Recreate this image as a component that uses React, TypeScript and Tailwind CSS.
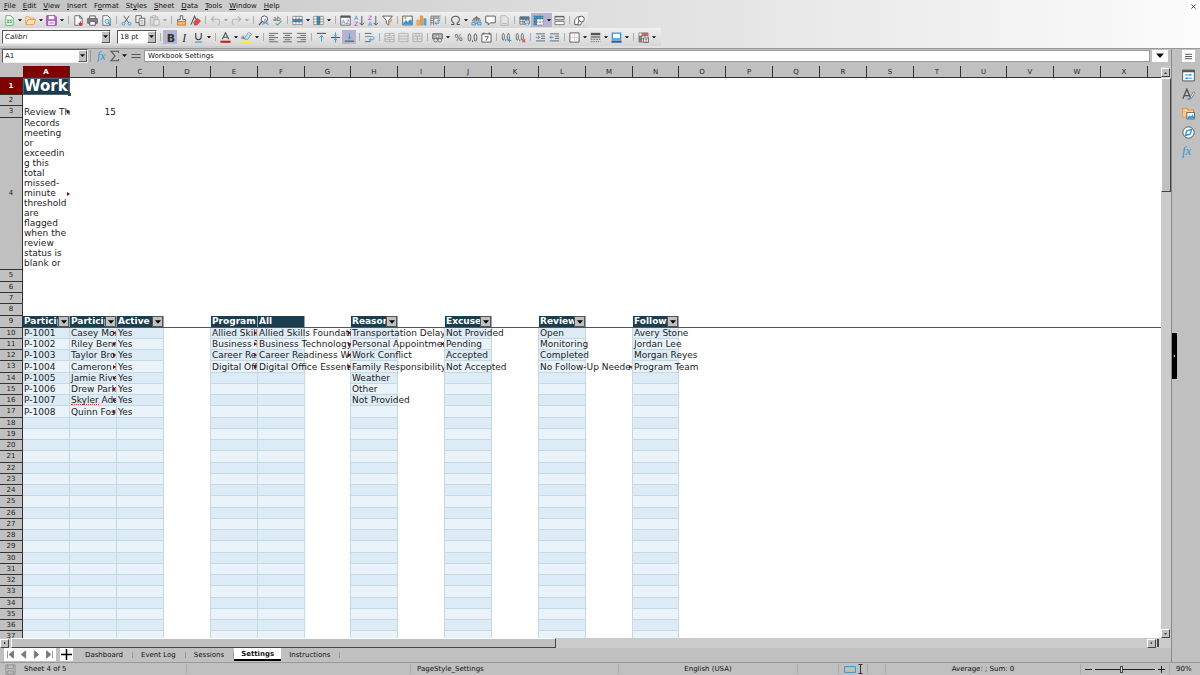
import React, { useState } from 'react';
import clsx from 'clsx';

const INK = '#555';
const BLUE = '#3596d8';
const FONT = "font-['DejaVu_Sans','Liberation_Sans',sans-serif]";

const page = <path d="M2 .8h5.4L10 3.4v7.8H2z" fill="#fff" stroke={INK} strokeWidth=".9" />;
const grid = <path d="M1 2h10v8H1zM1 4.7h10M1 7.4h10M4.3 2v8M7.6 2v8" fill="none" stroke={INK} strokeWidth=".8" />;
const omega = 'M1.2 10.3h3V9C2.4 8 1.7 6.600 1.700 5.200 1.700 2.800 3.500 1.300 6 1.300s4.300 1.500 4.300 3.900C10.300 6.600 9.600 8 7.800 9v1.300h3';

const icons: Record<string, React.ReactNode> = {
  new: (
    <>
      <path d="M2 .8h5.4L10 3.4v7.8H2z" fill="#fff" stroke="#4fae6a" />
      <path d="M3.500 5h5v4h-5z" fill="#4fae6a" />
      <path d="M3.500 7h5M6 5v4" stroke="#fff" strokeWidth=".6" />
    </>
  ),
  open: (
    <>
      <path d="M1 10V2h3.500l1 1.500H10V5" fill="#fff3e0" stroke="#e8973c" />
      <path d="M1 10.500 3 5h8.600l-2 5.500z" fill="#fde3bd" stroke="#e8973c" />
    </>
  ),
  save: (
    <>
      <path d="M.8.8h9.200L11.200 2v9.200H.8z" fill="#b968c8" stroke="#8f3fa3" />
      <path d="M3 1h6v3.500H3z" fill="#fff" />
      <path d="M2.500 6.500h7V11h-7z" fill="#fff" />
      <path d="M3.500 8h5M3.500 9.500h5" stroke="#b05ec0" strokeWidth=".7" />
    </>
  ),
  pdf: (
    <>
      {page}
      <path d="M7.400.8v2.600H10" fill="none" stroke={INK} />
      <path d="M8 7v3.500M6.200 9 8 11l1.900-2" fill="none" stroke="#d8262c" strokeWidth="1.300" />
    </>
  ),
  print: (
    <>
      <path d="M3 4V1h6v3" fill="#fff" stroke={INK} />
      <path d="M.8 4h10.400v5H.8z" fill="#888" stroke={INK} />
      <path d="M3 7h6v4.200H3z" fill="#fff" stroke={INK} />
    </>
  ),
  preview: (
    <>
      {page}
      <circle cx="6.500" cy="7" r="2.200" fill="#d7edfb" stroke={BLUE} />
      <path d="m8 8.600 2.500 2.600" stroke={BLUE} strokeWidth="1.300" />
    </>
  ),
  cut: (
    <>
      <path d="M3 .8 8.300 8.500M9 .8 3.700 8.500" stroke={INK} />
      <circle cx="2.700" cy="9.500" r="1.600" fill="none" stroke={BLUE} />
      <circle cx="9.300" cy="9.500" r="1.600" fill="none" stroke={BLUE} />
    </>
  ),
  copy: (
    <>
      <path d="M1 .8h6v7.500H1z" fill="#fff" stroke={INK} />
      <path d="M4.500 3.500h6.200v7.700H4.500z" fill="#fff" stroke={INK} />
      <path d="M6 6h3.200M6 7.500h3.200M6 9h3.200" stroke={BLUE} strokeWidth=".7" />
    </>
  ),
  paste: (
    <>
      <path d="M1.500 2h8v9h-8z" fill="#d6d6d6" stroke="#b4b4b4" />
      <path d="M3.500.8h4V3h-4zM5.500 5h5.500v6.300H5.500z" fill="#e8e8e8" stroke="#b4b4b4" />
    </>
  ),
  clone: (
    <>
      <path d="M4.700.8h2.600V5h3v2H1.700V5h3z" fill="#fff" stroke={INK} />
      <path d="M1.700 7h8.600v4H1.700z" fill="#f7b878" stroke="#cf7a24" />
    </>
  ),
  clear: (
    <>
      <path d="M1 10.500 5 1.500l3 6" fill="none" stroke={INK} strokeWidth="1.200" />
      <path d="m4 8 4-4.500 3.500 3L7.500 11H5z" fill="#e5484d" stroke="#b8252b" strokeWidth=".6" />
    </>
  ),
  undo: <path d="M4.500 1.500 1.300 4.700l3.200 3M1.500 4.700H8c3.200 0 3.700 4 1 6" fill="none" stroke="#b4b4b4" strokeWidth="1.100" />,
  redo: <path d="m7.500 1.500 3.200 3.200-3.200 3M10.500 4.700H4c-3.200 0-3.700 4-1 6" fill="none" stroke="#b4b4b4" strokeWidth="1.100" />,
  find: (
    <>
      <circle cx="7" cy="4.500" r="3.500" fill="#fff" stroke={INK} />
      <path d="M4.500 7 1 11" stroke={INK} strokeWidth="1.400" />
      <path d="M5 11 8 4l3 7M6 9h4" fill="none" stroke={BLUE} strokeWidth=".9" />
    </>
  ),
  spell: (
    <>
      <text x="1" y="7" fontSize="7" fill={INK}>ab</text>
      <path d="m4 9 1.800 2L10.500 6.500" fill="none" stroke="#42a96a" strokeWidth="1.100" />
    </>
  ),
  row: (
    <>
      <path d="M.8 1.500h10.400v9H.8z" fill="#fff" />
      <path d="M.8 4.500h10.400v3H.8z" fill={BLUE} />
      <path d="M.8 1.500h10.400v9H.8zM.8 4.500h10.400M.8 7.500h10.400M4.300 1.500v9M7.700 1.500v9" fill="none" stroke={INK} strokeWidth=".6" />
    </>
  ),
  col: (
    <>
      <path d="M.8 1.500h10.400v9H.8z" fill="#fff" />
      <path d="M4.300 1.500h3.400v9H4.300z" fill={BLUE} />
      <path d="M.8 1.500h10.400v9H.8zM.8 4.500h10.400M.8 7.500h10.400M4.300 1.500v9M7.700 1.500v9" fill="none" stroke={INK} strokeWidth=".6" />
    </>
  ),
  sort: (
    <>
      <path d="M.8 1h10.400v10H.8z" fill="#fff" stroke={INK} strokeWidth=".9" />
      <path d="M.8 1h10.400v2H.8z" fill={INK} />
      <text x="1.300" y="9.500" fontSize="6.500" fill={BLUE}>A</text>
      <text x="6" y="9.500" fontSize="6.500" fill="#b04fc4">Z</text>
    </>
  ),
  sortAsc: (
    <>
      <text x="0" y="5.500" fontSize="6.500" fill={BLUE}>A</text>
      <text x="0" y="11.500" fontSize="6.500" fill="#b04fc4">Z</text>
      <path d="M8.500 1v10M6 8.500 8.500 11 11 8.500" fill="none" stroke={INK} />
    </>
  ),
  sortDesc: (
    <>
      <text x="0" y="5.500" fontSize="6.500" fill="#b04fc4">Z</text>
      <text x="0" y="11.500" fontSize="6.500" fill={BLUE}>A</text>
      <path d="M8.500 1v10M6 8.500 8.500 11 11 8.500" fill="none" stroke={INK} />
    </>
  ),
  filter: (
    <>
      <path d="M.8 1.200h10.400L7.300 6v5L4.700 9V6z" fill="#fff" stroke={INK} />
      <path d="M11 3.500 7 7.500v3.500l4-5z" fill="#f0953d" />
    </>
  ),
  image: (
    <>
      <path d="M.8 1.200h10.400v9.600H.8z" fill="#fff" stroke={INK} />
      <path d="m1.300 9 3-3.500 2 2L9 4.500l1.800 2v3.800H1.300z" fill={BLUE} />
      <circle cx="3.800" cy="3.500" r="1.200" fill="#f0953d" />
    </>
  ),
  chart: (
    <>
      <path d="M1 5.500h2.500V11H1z" fill="#f7b267" stroke="#d9822b" strokeWidth=".6" />
      <path d="M4.700 1h2.600v10H4.700z" fill="#f0953d" stroke="#d9822b" strokeWidth=".6" />
      <path d="M8.500 4H11v7H8.500z" fill="#56a7e0" stroke={BLUE} strokeWidth=".6" />
    </>
  ),
  pivot: (
    <>
      <path d="M1 1.200h10.500M1 1.200V11M1 3.500h3M1 6h3M1 8.500h3M4 1.200V11M6.500 1.200v2M9 1.200v2M4 3.500h7.500" fill="none" stroke={INK} strokeWidth=".7" />
      <path d="M5.500 9h4V5.500M7 7.500 5.500 9 7 10.500M8 6.500l1.500-1.500L11 6.500" fill="none" stroke={BLUE} />
    </>
  ),
  omega: <path d={omega} fill="none" stroke={INK} strokeWidth="1.100" />,
  link: (
    <>
      <path d="M1.500 6.500a4.600 4.600 0 0 1 9 0zM6 1.500v5M2.200 4.300h7.600M4 6.500c0-3 1-4 2-5 1 1 2 2 2 5" fill="#eee" stroke={INK} strokeWidth=".7" />
      <path d="M1 8h4v2.700H1zM7 8h4v2.700H7zM4 9.300h4" fill="none" stroke={BLUE} />
    </>
  ),
  comment: <path d="M.8 1.200h10.400v7.300H6L3.500 11V8.500H.8z" fill="#fff" stroke={INK} />,
  headers: (
    <>
      <path d="M2 .8h5.400L10 3.400v7.800H2z" fill="#e4e4e4" stroke="#b4b4b4" />
      <path d="M3.500 9.300h5" stroke="#b4b4b4" />
    </>
  ),
  define: (
    <>
      <path d="M1 2h10v8H1z" fill="#fff" />
      <path d="M1 2h10v2.600H1z" fill={BLUE} />
      {grid}
      <path d="M6 6.500h5.500v2.500H6z" fill="#fff" stroke={INK} strokeWidth=".8" />
      <path d="M7 9h3.500v2H7z" fill="#fff" stroke={BLUE} strokeWidth=".7" />
    </>
  ),
  freeze: (
    <>
      <path d="M1 1h10v10H1z" fill="#fff" />
      <path d="M1 1h10v3.300H1zM1 1h3.300v10H1z" fill={BLUE} />
      <path d="M1 1h10v10H1zM1 4.300h10M1 7.600h10M4.300 1v10M7.600 1v10" fill="none" stroke={INK} strokeWidth=".6" strokeDasharray="2 1" />
    </>
  ),
  split: (
    <>
      <path d="M1 1.500h10v3.300H1zM1 7.200h10v3.300H1z" fill="#fff" stroke={INK} strokeWidth=".8" />
      <path d="M1 2h10" stroke={INK} strokeWidth="1.200" />
      <path d="M0 6h12" stroke="#999" strokeWidth=".6" />
    </>
  ),
  shapes: (
    <>
      <path d="M.8 5 4 2h4v5l-3 3.500H.8z" fill="#fff" stroke={INK} />
      <circle cx="8" cy="4.500" r="3.200" fill="#fff" stroke={INK} />
      <path d="m5.500 6 3 2.300-1.500 2.500H4z" fill="#fff" stroke={INK} />
    </>
  ),
  bold: <text x="1.800" y="10.700" fontSize="12" fontWeight="bold" fill="#333">B</text>,
  italic: <text x="3.500" y="10.500" fontSize="13" fontStyle="italic" fontFamily="Liberation Serif" fill="#333">I</text>,
  underline: (
    <>
      <path d="M3 1v4.500c0 3.800 6 3.800 6 0V1" fill="none" stroke="#333" strokeWidth="1.100" />
      <path d="M2 11h8" stroke={BLUE} strokeWidth="1.200" />
    </>
  ),
  fontColor: (
    <>
      <path d="M2.500 8 6 .8 9.500 8M3.800 5.800h4.400" fill="none" stroke={INK} strokeWidth="1.200" />
      <path d="M.5 9.500h11v2.300H.5z" fill="#c9211e" />
    </>
  ),
  highlight: (
    <>
      <text x="0" y="8" fontSize="6.500" fill={INK}>a</text>
      <path d="m4 6 3-4 3 2-2.500 4H4z" fill="#bcdcf3" stroke={BLUE} strokeWidth=".8" />
      <path d="m7 2 1.500-1.500 3 2L10 4" fill="#fff" stroke={INK} strokeWidth=".7" />
      <path d="M.5 9.500h11v2.300H.5z" fill="#ffee20" />
    </>
  ),
  alignLeft: <path d="M1 1.500h10M1 3.800h6M1 6.100h10M1 8.400h6M1 10.700h10" stroke={INK} strokeWidth=".9" />,
  alignCenter: <path d="M1 1.500h10M3 3.800h6M1 6.100h10M3 8.400h6M1 10.700h10" stroke={INK} strokeWidth=".9" />,
  alignRight: <path d="M1 1.500h10M5 3.800h6M1 6.100h10M5 8.400h6M1 10.700h10" stroke={INK} strokeWidth=".9" />,
  alignTop: (
    <>
      <path d="M1 1.500h10" stroke={INK} strokeWidth="1.200" />
      <path d="M6 10.500V4M3.800 6 6 3.800 8.200 6" fill="none" stroke={BLUE} />
    </>
  ),
  alignMiddle: (
    <>
      <path d="M1 6h10" stroke={INK} strokeWidth="1.200" />
      <path d="M6 .5v4M4.300 3 6 4.700 7.700 3M6 11.500v-4M4.300 9 6 7.300 7.700 9" fill="none" stroke={BLUE} />
    </>
  ),
  alignBottom: (
    <>
      <path d="M1 10h10" stroke={INK} strokeWidth="1.200" />
      <path d="M6 1v6.500M3.800 5.500 6 7.700l2.200-2.200" fill="none" stroke={BLUE} />
    </>
  ),
  wrap: (
    <>
      <path d="M1 1.500h7M1 10.500h6" stroke={INK} strokeWidth=".9" />
      <path d="M1 5h8c2.500 0 2.500 3.500 0 3.500H6M7.500 6.800 5.800 8.500l1.700 1.700" fill="none" stroke={BLUE} />
    </>
  ),
  merge: <path d="M1 1.500h10v9H1zM1 4h10M1 8h10M6 1.500V4M6 8v2.500M3 6h6" fill="none" stroke="#ababab" strokeWidth=".9" />,
  mergeCells: <path d="M1 1.500h10v9H1zM1 4.500h10M1 7.500h10" fill="none" stroke="#ababab" strokeWidth=".9" />,
  unmerge: <path d="M1 1.500h10v9H1zM1 4.500h10M1 7.500h10M4.300 1.500v3M7.600 1.500v3M6 4.500v6" fill="none" stroke="#ababab" strokeWidth=".9" />,
  currency: (
    <>
      <path d="M.8 2h10.400v5.500H.8z" fill="#bbb" stroke={INK} />
      <circle cx="6" cy="4.700" r="1.600" fill="#eee" stroke={INK} strokeWidth=".6" />
      <circle cx="4" cy="9" r="2" fill="#ddd" stroke={INK} strokeWidth=".7" />
      <circle cx="8.500" cy="9" r="2" fill="#ddd" stroke={INK} strokeWidth=".7" />
    </>
  ),
  percent: <text x="1.500" y="9.500" fontSize="9.500" fill={INK}>%</text>,
  number: <path d="M2.700 2C.8 2 .8 10 2.700 10s1.900-8 0-8zM9.200 2c-1.900 0-1.900 8 0 8s1.900-8 0-8zM6 9v2" fill="none" stroke={INK} />,
  date: (
    <>
      <path d="M1 2h10v9H1z" fill="#fff" stroke={INK} />
      <path d="M3 .5V3M9 .5V3M4 5h4L5.500 9.500" fill="none" stroke={INK} />
    </>
  ),
  addDecimal: (
    <>
      <path d="M2.500 1.500C.9 1.500.9 9 2.500 9s1.600-7.500 0-7.500zM8 1.500C6.400 1.500 6.400 9 8 9s1.600-7.500 0-7.500zM5.200 8v2" fill="none" stroke={INK} strokeWidth=".9" />
      <path d="M9.300 7.300v4M7.300 9.300h4" stroke={BLUE} strokeWidth="1.100" />
    </>
  ),
  delDecimal: (
    <>
      <path d="M2.500 1.500C.9 1.500.9 9 2.500 9s1.600-7.500 0-7.500zM8 1.500C6.400 1.500 6.400 9 8 9s1.600-7.500 0-7.500zM5.200 8v2" fill="none" stroke={INK} strokeWidth=".9" />
      <path d="m8 8 3.300 3.300M11.300 8 8 11.300" stroke="#e5484d" strokeWidth="1.100" />
    </>
  ),
  indent: (
    <>
      <path d="M1 2h10M6.500 4.500H11M6.500 7H11M1 9.700h10" stroke={INK} strokeWidth=".9" />
      <path d="M.8 5.800h4M3.200 4l1.900 1.800-1.900 1.700" fill="none" stroke={BLUE} />
    </>
  ),
  outdent: (
    <>
      <path d="M1 2h10M6.500 4.500H11M6.500 7H11M1 9.700h10" stroke={INK} strokeWidth=".9" />
      <path d="M1 5.800h4.200M2.800 4 1 5.800l1.800 1.700" fill="none" stroke={BLUE} />
    </>
  ),
  borders: (
    <>
      <path d="M1 1h10v10H1z" fill="#fff" stroke={INK} />
      <path d="M6 1.500v9M1.500 6h9" stroke="#f0b898" strokeWidth=".8" />
    </>
  ),
  lineStyle: (
    <>
      <path d="M.8 2.200h10.400" stroke={INK} strokeWidth="2.600" />
      <path d="M.8 5.500h10.400" stroke={INK} strokeWidth="1.300" />
      <path d="M.8 8h10.400" stroke={INK} strokeDasharray="2 1" />
      <path d="M.8 10.500h10.400" stroke={INK} strokeDasharray="1 1" />
    </>
  ),
  lineColor: (
    <>
      <path d="M1.500 1.200h9v6.500h-9z" fill="#fff" stroke={BLUE} strokeWidth="1.500" />
      <path d="M.5 9.300h11v2.400H.5z" fill="#2a6099" />
    </>
  ),
  conditional: (
    <>
      <path d="M1 1h10v10H1z" fill="#fff" />
      <path d="M4.300 1H11v3.300H4.300z" fill="#ee6a6e" />
      <path d="M1 4.300h3.300v3.300H1z" fill="#59b36c" />
      <path d="M1 7.600h3.300V11H1z" fill="#ee6a6e" />
      <path d="M1 1h10v10H1zM1 4.300h10M1 7.600h10M4.300 1v10M7.600 1v6" fill="none" stroke={INK} strokeWidth=".6" />
      <path d="M6 6.500h5.500v5H6z" fill="#eee" stroke={INK} strokeWidth=".8" />
      <path d="M7.500 8h2.700M7.500 10h2.700" stroke={INK} strokeWidth=".7" />
    </>
  ),
  fx: <text x="0" y="9.500" fontSize="12" fontStyle="italic" fontFamily="Liberation Serif" fill={BLUE}>fx</text>,
  sum: <path d="M9.500 2.800V1.200H2L6 6l-4 4.800h7.500V9" fill="none" stroke={INK} strokeWidth="1.100" />,
  equals: <path d="M1.500 4.500h9M1.500 7.500h9" stroke={INK} strokeWidth="1.200" />,
  properties: (
    <>
      <path d="M.6 1h10.800v10H.6z" fill="#fff" stroke={INK} strokeWidth=".9" />
      <path d="M.6 1h10.800v2H.6z" fill={INK} />
      <path d="M2.500 5.500h7M2.500 8.500h7M7.500 4.300v2.400M4.500 7.300v2.400" stroke={BLUE} strokeWidth=".9" />
    </>
  ),
  styles: (
    <>
      <path d="M.8 10 4.500 1l3.200 8M2 7h4.500" fill="none" stroke={INK} strokeWidth="1.300" />
      <path d="m7.500 8.500 3.300-5 1 .8-3 5z" fill="#fff" stroke={INK} strokeWidth=".6" />
      <path d="M4 11c1.500-.2 1.800-2.500 3.500-2.500s2 2.700-3.500 2.500z" fill={BLUE} />
    </>
  ),
  gallery: (
    <>
      <path d="M.6 9.500V1.500h3.800l1 1.400h5.200V5" fill="#fde3bd" stroke="#e8973c" />
      <path d="M.6 3.500v6h4v-5z" fill="#f9c98d" stroke="#e8973c" strokeWidth=".6" />
      <path d="M4.500 5h7v6h-7z" fill="#fff" stroke={INK} strokeWidth=".8" />
      <path d="m5 10 2-2.300 1.200 1.200L9.500 7l1.600 2v1.500H5z" fill={BLUE} />
    </>
  ),
  navigator: (
    <>
      <circle cx="6" cy="6" r="5.200" fill="#fff" stroke={INK} strokeWidth=".9" />
      <path d="M9 3 7.500 7.500 3 9l1.500-4.500z" fill="none" stroke={BLUE} strokeWidth="1.300" />
    </>
  ),
};

function Icon({ name, className = 'size-3' }: { name: string; className?: string }) {
  return (
    <svg viewBox="0 0 12 12" className={clsx('shrink-0', className)} aria-hidden="true">
      {icons[name]}
    </svg>
  );
}

function Caret({ className = 'w-[5px]' }: { className?: string }) {
  return (
    <svg viewBox="0 0 6 4" className={clsx('shrink-0', className)} aria-hidden="true">
      <path d="M0 .3h6L3 3.700z" fill="currentColor" />
    </svg>
  );
}

// '|' is a separator, 'v' a drop-down arrow, 'x' a disabled one
const standardBar =
  'new v open v save v | pdf print preview | cut copy paste x | clone clear | undo x redo x | find spell | row v col v | sort sortAsc sortDesc filter | image chart pivot | omega v link comment headers | define freeze* v* split | shapes'.split(' ');
const formatBar =
  'bold* italic underline v | fontColor v highlight v | alignLeft alignCenter alignRight | alignTop alignMiddle alignBottom* | wrap | merge mergeCells unmerge | currency v percent number date | addDecimal delDecimal | indent outdent | borders v lineStyle v lineColor v | conditional v'.split(' ');

function ToolItems({ items }: { items: string[] }) {
  return (
    <>
      {items.map((item, i) => {
        const active = item.endsWith('*');
        const name = item.replace('*', '');
        if (name === '|') {
          return (
            <span key={i} className="flex w-[6px] shrink-0 justify-center">
              <span className="h-2 w-px bg-[#b0b0b0]" />
            </span>
          );
        }
        if (name === 'v' || name === 'x') {
          return (
            <button
              key={i}
              aria-label="More options"
              className={clsx('flex h-[14px] w-[7px] shrink-0 items-center justify-center', name === 'x' ? 'text-[#999]' : 'text-black', active && 'bg-[#b4b4d0]')}
            >
              <Caret className="w-1" />
            </button>
          );
        }
        return (
          <button
            key={i}
            aria-label={name}
            className={clsx('flex h-[14px] w-[14px] shrink-0 items-center justify-center', active && 'bg-[#b4b4d0]')}
          >
            <Icon name={name} className="size-[11px]" />
          </button>
        );
      })}
    </>
  );
}

function Combo({ label, value, className, italic }: { label: string; value: string; className: string; italic?: boolean }) {
  return (
    <div className={clsx('relative h-[14px] shrink-0 border border-r-[#eee] border-b-[#eee] border-[#555] bg-white', className)}>
      <select aria-label={label} className={clsx('block h-3 w-full appearance-none bg-transparent pl-[2px] leading-3 outline-none', italic && 'italic')}>
        <option>{value}</option>
      </select>
      <span className="pointer-events-none absolute inset-y-0 right-0 flex w-[9px] items-center justify-center border border-t-white border-r-[#555] border-b-[#555] border-l-white bg-[#c0c0c0]">
        <Caret className="w-[5px]" />
      </span>
    </div>
  );
}

const menus: [string, string, string][] = [
  ['', 'F', 'ile'], ['', 'E', 'dit'], ['', 'V', 'iew'], ['', 'I', 'nsert'], ['F', 'o', 'rmat'], ['St', 'y', 'les'],
  ['', 'S', 'heet'], ['', 'D', 'ata'], ['', 'T', 'ools'], ['', 'W', 'indow'], ['', 'H', 'elp'],
];

const columns = 'ABCDEFGHIJKLMNOPQRSTUVWX'.split('');
const banded = ['A', 'B', 'C', 'E', 'F', 'H', 'J', 'L', 'N'];

const headings: Record<string, string> = {
  A: 'Participant ID', B: 'Participant Name', C: 'Active', E: 'Program', F: 'All', H: 'Reason', J: 'Excused', L: 'Review', N: 'Follow-Up',
};

// cells filled from row 10 downwards
const lists: Record<string, string[]> = {
  A: ['P-1001', 'P-1002', 'P-1003', 'P-1004', 'P-1005', 'P-1006', 'P-1007', 'P-1008'],
  B: ['Casey Morgan', 'Riley Bennett', 'Taylor Brooks', 'Cameron Lee', 'Jamie Rivera', 'Drew Parker', 'Skyler Adams', 'Quinn Foster'],
  C: ['Yes', 'Yes', 'Yes', 'Yes', 'Yes', 'Yes', 'Yes', 'Yes'],
  E: ['Allied Skills', 'Business Tech', 'Career Readiness', 'Digital Office'],
  F: ['Allied Skills Foundations', 'Business Technology Basics', 'Career Readiness Workshop', 'Digital Office Essentials'],
  H: ['Transportation Delay', 'Personal Appointment', 'Work Conflict', 'Family Responsibility', 'Weather', 'Other', 'Not Provided'],
  J: ['Not Provided', 'Pending', 'Accepted', 'Not Accepted'],
  L: ['Open', 'Monitoring', 'Completed', 'No Follow-Up Needed'],
  N: ['Avery Stone', 'Jordan Lee', 'Morgan Reyes', 'Program Team'],
};

// cells whose text is cut off by a filled neighbour
const isCut = (col: string, i: number) =>
  col === 'B' || col === 'E' || col === 'F' || (col === 'H' && i === 1) || (col === 'L' && i === 3);

function CutMark() {
  return (
    <svg viewBox="0 0 3 4" className="pointer-events-none absolute top-1/2 right-0 h-1 w-[3px] -translate-y-1/2" aria-hidden="true">
      <path d="M0 0v4l3-2z" fill="#6b0a1e" />
    </svg>
  );
}

function RowHead({ n, active }: { n: number; active?: boolean }) {
  return (
    <th
      scope="row"
      className={clsx(
        'overflow-hidden border-r border-b border-[#333] p-0 text-center align-middle text-[7px] leading-[9px]',
        active ? 'bg-[#800000] font-bold text-white' : 'bg-[#c0c0c0] font-normal'
      )}
    >
      {n}
    </th>
  );
}

function ListCell({ col, row }: { col: string; row: number }) {
  if (!banded.includes(col)) {
    const beforeList = banded.includes(columns[columns.indexOf(col) + 1]);
    return <td className={clsx('p-0', beforeList && 'border-r border-[#c3d9e3]')} />;
  }
  const i = row - 10;
  const text = lists[col][i];
  const wide = col === 'F' || col === 'H' || col === 'L';
  return (
    <td className={clsx('border-r border-b border-[#c3d9e3] p-0 align-middle', row % 2 === 0 ? 'bg-[#ddebf6]' : 'bg-[#eaf3f9]')}>
      {text && (
        <div className={clsx('relative h-[10px] pl-px leading-[10px] whitespace-nowrap', wide ? 'w-[93px] overflow-hidden' : (col === 'B' || col === 'E') && 'overflow-hidden')}>
          {text.startsWith('Skyler') ? (
            <>
              <span className="inline-block h-[10px] border-b border-dotted border-red-500 align-top">Skyler</span> Adams
            </>
          ) : (
            text
          )}
          {isCut(col, i) && <CutMark />}
        </div>
      )}
    </td>
  );
}

function Sheet() {
  const rows = Array.from({ length: 29 }, (_, i) => i + 10);
  return (
    <table className="w-full table-fixed border-separate border-spacing-0 text-[9px] text-[#1c1c1c]">
      <colgroup>
        <col className="w-[23px]" />
        {columns.map((c, i) => (
          <col key={c} className={i % 7 === 6 ? 'w-[46px]' : 'w-[47px]'} />
        ))}
        <col />
      </colgroup>
      <thead>
        <tr className="h-3 bg-[#c0c0c0] text-[7px] leading-[9px]">
          <td className="border-b border-[#333] p-0" />
          {columns.map((c) => (
            <th
              key={c}
              scope="col"
              className={clsx('border-r border-b border-[#333] p-0 pt-[2px]', c === 'A' ? 'bg-[#800000] text-white' : 'font-normal')}
            >
              {c}
            </th>
          ))}
          <td className="border-b border-[#333] p-0" />
        </tr>
      </thead>
      <tbody>
        <tr className="h-[17px]">
          <RowHead n={1} active />
          <td className="border border-[#52616b] bg-[#1b3d50] p-0 align-middle">
            <div className="relative">
              <div className="h-[15px] overflow-hidden text-[15px] leading-[15px] font-bold whitespace-nowrap text-white">Workbook Settings</div>
              <span className="absolute -right-[2px] -bottom-[2px] size-[3px] bg-[#444]" />
            </div>
          </td>
          <td colSpan={24} className="p-0" />
        </tr>
        <tr className="h-[11px]">
          <RowHead n={2} />
          <td colSpan={25} className="p-0" />
        </tr>
        <tr className="h-3">
          <RowHead n={3} />
          <td className="p-0">
            <div className="relative overflow-hidden pl-px leading-[11px] whitespace-nowrap">
              Review Threshold
              <CutMark />
            </div>
          </td>
          <td className="p-0 pr-px text-right leading-[11px]">15</td>
          <td colSpan={23} className="p-0" />
        </tr>
        <tr className="h-[152px]">
          <RowHead n={4} />
          <td className="p-0 align-top">
            <div className="relative h-[152px] overflow-hidden pl-px leading-[10px] wrap-break-word">
              Records meeting or exceedin<wbr />g this total missed-minute threshold are flagged when the review status is blank or
              <CutMark />
            </div>
          </td>
          <td colSpan={24} className="p-0" />
        </tr>
        {[5, 6, 7, 8].map((n) => (
          <tr key={n} className={n === 5 || n === 8 ? 'h-3' : 'h-[11px]'}>
            <RowHead n={n} />
            <td colSpan={25} className="p-0" />
          </tr>
        ))}
        <tr className="h-3">
          <RowHead n={9} />
          {columns.map((c) => (
            <td key={c} className={clsx('border-b border-[#555] p-0', headings[c] && 'bg-[#1b3d50]')}>
              {headings[c] && (
                <div className="flex h-[11px] justify-between overflow-hidden border-r border-[#8fa3ae] pl-px leading-[11px] font-bold text-white">
                  <span className="min-w-0 overflow-hidden whitespace-nowrap">{headings[c]}</span>
                  {c !== 'E' && c !== 'F' && (
                    <button aria-label={`Filter ${headings[c]}`} className="flex w-[11px] shrink-0 items-center justify-center border border-[#555] bg-[#c0c0c0] text-black">
                      <Caret className="w-[6px]" />
                    </button>
                  )}
                </div>
              )}
            </td>
          ))}
          <td className="border-b border-[#555] p-0" />
        </tr>
        {rows.map((n) => (
          <tr key={n} className={n % 4 === 1 ? 'h-3' : 'h-[11px]'}>
            <RowHead n={n} />
            {columns.map((c) => (
              <ListCell key={c} col={c} row={n} />
            ))}
            <td className="p-0" />
          </tr>
        ))}
      </tbody>
    </table>
  );
}

const bevel = 'border border-t-white border-l-white border-r-[#444] border-b-[#444] bg-[#c0c0c0]';

function ScrollButton({ label, turn }: { label: string; turn: string }) {
  return (
    <button aria-label={label} className={clsx('flex size-[9px] shrink-0 items-center justify-center', bevel)}>
      <Caret className={clsx('w-[3px]', turn)} />
    </button>
  );
}

const tabs = ['Dashboard', 'Event Log', 'Sessions', 'Settings', 'Instructions'];
const navPaths = ['M2 1v10M10 1 4 6l6 5z', 'M9 1 3 6l6 5z', 'M3 1l6 5-6 5z', 'M10 1v10M2 1l6 5-6 5z'];
const navLabels = ['First sheet', 'Previous sheet', 'Next sheet', 'Last sheet'];

export default function App() {
  const [tab, setTab] = useState('Settings');
  const [zoom, setZoom] = useState(90);

  return (
    <div className={clsx('flex h-screen flex-col overflow-hidden bg-[#c0c0c0] text-[7px] leading-[10px] text-[#111]', FONT)}>
      <header className="shrink-0 border-b border-[#999] bg-linear-to-r from-[#c2c2c2] to-[#fcfcfc] pb-[2px]">
        <div className="flex h-3 items-center justify-between">
          <nav className="flex gap-[7px] pl-1">
            {menus.map(([a, key, b]) => (
              <button key={a + key + b}>
                {a}
                <u>{key}</u>
                {b}
              </button>
            ))}
          </nav>
          <button aria-label="Close" className="flex h-3 w-[13px] items-center justify-center bg-white">
            <svg viewBox="0 0 6 6" className="size-[5px]">
              <path d="m.5.5 5 5M5.500.5l-5 5" stroke="#222" />
            </svg>
          </button>
        </div>
        <div role="toolbar" aria-label="Standard" className="flex h-4 w-fit items-center bg-linear-to-b from-[#f0f0f0] to-[#d6d6d6] pr-[2px] pl-[2px]">
          <ToolItems items={standardBar} />
        </div>
        <div role="toolbar" aria-label="Formatting" className="flex h-[18px] w-fit items-center bg-linear-to-b from-[#f0f0f0] to-[#d6d6d6] pr-1 pl-[2px]">
          <Combo label="Font name" value="Calibri" italic className="mr-[6px] w-[109px]" />
          <Combo label="Font size" value="18 pt" className="w-10" />
          <ToolItems items={['|', ...formatBar]} />
        </div>
      </header>

      <div className="flex min-h-0 flex-1">
        <main className="flex min-w-0 flex-1 flex-col">
          <div className="flex h-[17px] shrink-0 items-center pr-[3px] pb-[3px] pl-[2px]">
            <Combo label="Name box" value="A1" className="w-[86px]" />
            <span className="mx-[2px] h-3 w-px bg-[#999]" />
            <button aria-label="Function wizard" className="ml-1">
              <Icon name="fx" />
            </button>
            <button aria-label="Select function">
              <Icon name="sum" />
            </button>
            <button aria-label="More functions" className="flex w-[7px] justify-center">
              <Caret />
            </button>
            <button aria-label="Formula" className="mx-[2px]">
              <Icon name="equals" />
            </button>
            <input aria-label="Formula input" defaultValue="Workbook Settings" className="h-3 min-w-0 flex-1 border border-[#999] bg-white pl-[3px] outline-none" />
            <button aria-label="Expand formula bar" className="ml-[2px] flex h-3 w-4 items-center justify-center bg-white">
              <Caret className="w-2" />
            </button>
          </div>

          <div className="flex min-h-0 flex-1">
            <div className="min-w-0 flex-1 overflow-hidden bg-white">
              <Sheet />
            </div>
            <div className="flex w-[10px] shrink-0 flex-col bg-[#cbcbcb] pt-[2px]">
              <ScrollButton label="Scroll up" turn="rotate-180" />
              <div className={clsx('mt-px h-1/5 w-[10px]', bevel)} />
              <div className="flex-1" />
              <ScrollButton label="Scroll down" turn="" />
            </div>
          </div>

          <div className="flex h-[10px] shrink-0 items-center bg-[#cbcbcb] pr-3">
            <ScrollButton label="Scroll left" turn="rotate-90" />
            <div className={clsx('ml-[2px] h-[10px] w-[47%]', bevel)} />
            <div className="flex-1" />
            <ScrollButton label="Scroll right" turn="-rotate-90" />
            <span className="ml-px h-2 w-[2px] bg-[#444]" />
          </div>

          <div className="flex h-[14px] shrink-0 items-start">
            <div className="ml-1 flex h-[13px] bg-white">
              {navPaths.map((d, i) => (
                <button key={d} aria-label={navLabels[i]} className="flex w-[13px] items-center justify-center">
                  <svg viewBox="0 0 12 12" className="size-[9px]">
                    <path d={d} fill="#777" stroke="#777" />
                  </svg>
                </button>
              ))}
            </div>
            <button aria-label="Add sheet" className="ml-1 flex h-[13px] w-[13px] items-center justify-center bg-white">
              <svg viewBox="0 0 11 11" className="size-[11px]">
                <path d="M5.500 0v11M0 5.500h11" stroke="#000" strokeWidth="1.500" />
              </svg>
            </button>
            <div role="tablist" className="ml-1 flex">
              {tabs.map((t) => (
                <button
                  key={t}
                  role="tab"
                  aria-selected={t === tab}
                  onClick={() => setTab(t)}
                  className={clsx('flex h-[13px] items-center', t === tab ? 'border-b-2 border-black bg-white px-[7px] font-bold' : 'pl-2')}
                >
                  {t}
                  {t !== tab && <span className="ml-[9px] h-[6px] w-px bg-[#999]" />}
                </button>
              ))}
            </div>
          </div>
        </main>

        <aside className="relative flex w-[29px] shrink-0 flex-col items-center gap-[7px] border-l border-[#888] pt-px pl-1">
          <button aria-label="Sidebar settings" className="flex h-3 w-[13px] items-center justify-center bg-white">
            <svg viewBox="0 0 8 8" className="size-[7px]">
              <path d="M0 1.500h8M0 4h8M0 6.500h8" stroke="#444" />
            </svg>
          </button>
          {['properties', 'styles', 'gallery', 'navigator', 'fx'].map((name) => (
            <button key={name} aria-label={name} className="flex h-3 items-center">
              <Icon name={name} className="size-[13px]" />
            </button>
          ))}
          <button aria-label="Collapse sidebar" className="absolute top-1/2 left-0 flex h-[46px] w-[5px] -translate-y-1/2 items-center justify-center bg-black text-white">
            <Caret className="w-[3px] -rotate-90" />
          </button>
        </aside>
      </div>

      <footer className="grid h-[13px] shrink-0 grid-cols-[187fr_224fr_208fr_179fr_41fr_29fr_18fr_195fr_89px_30px] items-center border-t border-[#999] *:flex *:h-[10px] *:items-center *:border-r *:border-[#a8a8a8]">
        <div className="gap-2 pl-[5px]">
          <svg viewBox="0 0 12 12" className="size-[11px]">
            <path d="M1 1h10v10H1zM3 1v4h6V1M3 11V7.500h6V11" fill="none" stroke="#8c8c8c" />
          </svg>
          <span>Sheet 4 of 5</span>
        </div>
        <div />
        <div className="pl-[6px]">PageStyle_Settings</div>
        <div className="justify-center">English (USA)</div>
        <div />
        <div className="justify-center gap-[2px]">
          <svg viewBox="0 0 12 7" className="w-3">
            <path d="M.6.6h10.800v5.800H.6z" fill="none" stroke={BLUE} />
          </svg>
          <svg viewBox="0 0 5 10" className="h-[10px]">
            <path d="M.5.5h4M.5 9.500h4M2.500.5v9" stroke="#333" />
          </svg>
        </div>
        <div />
        <div className="justify-center">Average: ; Sum: 0</div>
        <div className="justify-center gap-[3px]">
          <button aria-label="Zoom out" onClick={() => setZoom(zoom - 5)}>
            <svg viewBox="0 0 7 7" className="size-[7px]">
              <path d="M0 3.500h7" stroke="#222" />
            </svg>
          </button>
          <input
            type="range"
            aria-label="Zoom"
            min={20}
            max={180}
            value={zoom}
            onChange={(e) => setZoom(Number(e.target.value))}
            className="h-2 w-[60px] appearance-none bg-[linear-gradient(#222,#222)] bg-[length:100%_1px] bg-center bg-no-repeat [&::-webkit-slider-thumb]:h-[7px] [&::-webkit-slider-thumb]:w-[3px] [&::-webkit-slider-thumb]:appearance-none [&::-webkit-slider-thumb]:border [&::-webkit-slider-thumb]:border-[#444] [&::-webkit-slider-thumb]:bg-[#ddd]"
          />
          <button aria-label="Zoom in" onClick={() => setZoom(zoom + 5)}>
            <svg viewBox="0 0 7 7" className="size-[7px]">
              <path d="M0 3.500h7M3.500 0v7" stroke="#222" />
            </svg>
          </button>
        </div>
        <div className="border-r-0! pl-[6px]">{zoom}%</div>
      </footer>
    </div>
  );
}
